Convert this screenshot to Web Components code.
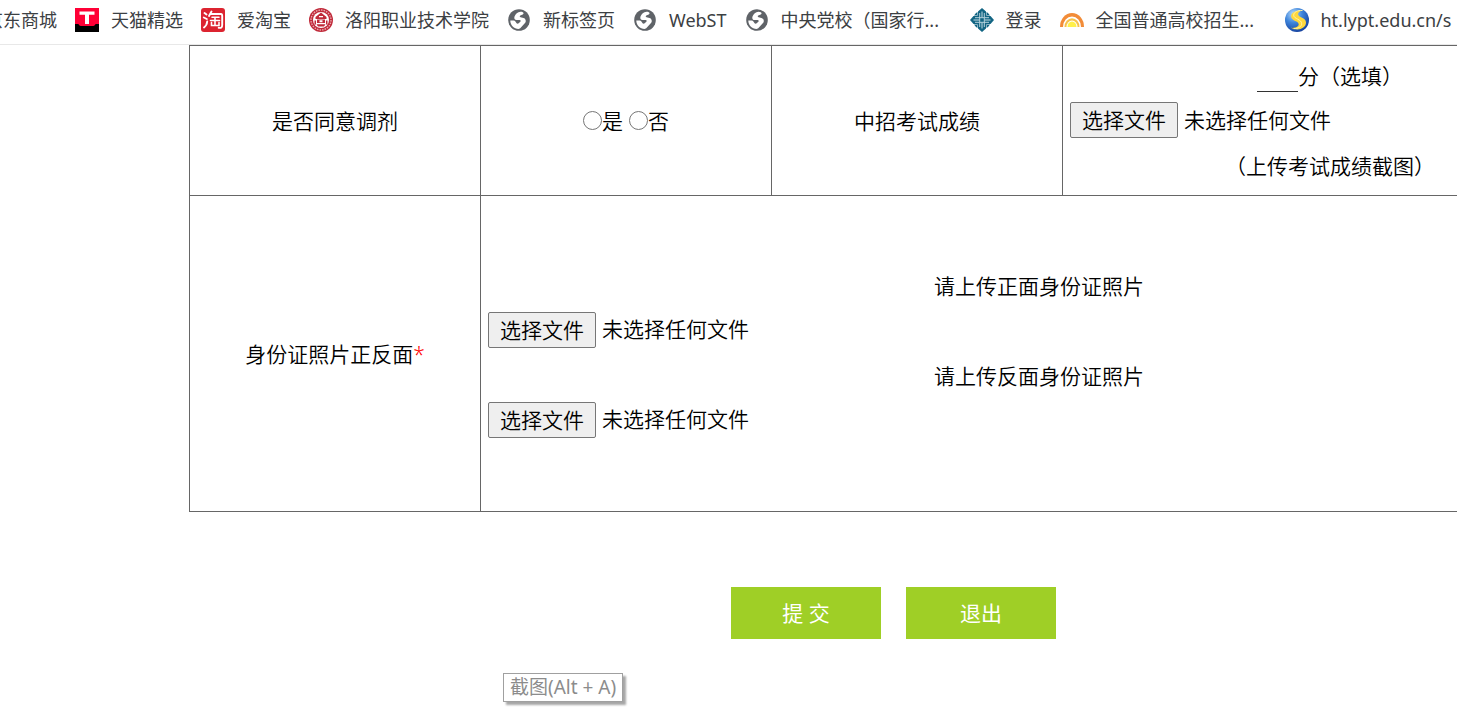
<!DOCTYPE html>
<html lang="zh-CN">
<head>
<meta charset="utf-8">
<meta name="viewport" content="width=device-width, initial-scale=1">
<title>报名表</title>
<style>
  body {
    margin: 0;
    background: #fff;
    color: #000;
    font-family: "Noto Sans", "Noto Sans CJK SC", sans-serif;
    overflow-x: hidden;
  }
</style>
</head>
<body>
<bookmark-bar>
  <bookmark-link>京东商城</bookmark-link>
  <bookmark-link icon="tmall">天猫精选</bookmark-link>
  <bookmark-link icon="taobao">爱淘宝</bookmark-link>
  <bookmark-link icon="college">洛阳职业技术学院</bookmark-link>
  <bookmark-link icon="globe">新标签页</bookmark-link>
  <bookmark-link icon="globe">WebST</bookmark-link>
  <bookmark-link icon="globe" long>中央党校（国家行...</bookmark-link>
  <bookmark-link icon="knot">登录</bookmark-link>
  <bookmark-link icon="sun" long>全国普通高校招生...</bookmark-link>
  <bookmark-link icon="swirl">ht.lypt.edu.cn/s</bookmark-link>
</bookmark-bar>
<enrol-form></enrol-form>
<hover-tip>截图(Alt + A)</hover-tip>

<script>
const ICONS = {
  tmall: `
    <rect width="24" height="24" fill="#ff0036"/>
    <path d="M0 16h3c1 0 1 2 3 2h12c2 0 2-2 3-2h3v8H0z" fill="#000"/>
    <path d="M4.500 3.500h15v3.200h-5.500V16h-4V6.700H4.500z" fill="#fff"/>`,
  taobao: `
    <rect width="24" height="24" rx="3" fill="#dc2430"/>
    <g fill="none" stroke="#fff" stroke-width="1.9" stroke-linecap="round">
      <path d="M3.500 5l2 1.500M2.800 9.500l3 1.500M3 19.500c2-1.500 3-3.500 3.200-6"/>
      <path d="M10.500 3.500L8 8M9.500 6H20c1 0 1.200 1 1.200 2v9c0 2.500-1 3-3.500 2.800"/>
      <path d="M11 9.300h7M9.500 12.500h9M14 9.500v7.500M10.500 14.500v3h7.500v-3" stroke-width="1.600"/>
    </g>`,
  college: `
    <circle cx="12" cy="12" r="12" fill="#c02a3a"/>
    <circle cx="12" cy="12" r="10" fill="none" stroke="#e9a9af" stroke-width="1.300" stroke-dasharray="1.600 1"/>
    <circle cx="12" cy="12" r="8" fill="#fff"/>
    <path d="M12 4.500l5.500 4.500v2h-11V9zM8 11.500h8V15H8zM5.500 12.500h1.500v4H5.500zM17 12.500h1.500v4H17zM7.500 16.200h9l-1.500 2.300H9z" fill="#c02a3a"/>
    <path d="M10 8h4v1.300h-4zM10.500 12.200h3v2h-3z" fill="#fff"/>`,
  globe: `
    <circle cx="12" cy="12" r="10.800" fill="#5f6368"/>
    <path d="M13.500 3.800c-3 .2-5 2.200-6 4.700-.7 2 .3 3.600 2 3.600h3.200c1 0 1.300 1 .6 1.700l-1.600 1.500c-.8.7-1.800.5-2.300-.3l-1-1.500c-.4-.6-1-.9-1.800-.9H3.300c0 4.800 3.700 8.300 8.200 8.300 1 0 1.600-.5 2.200-1.200l4.300-4.600c1.500-1.800.8-4.600-1.500-5.200l-3-.7c-1-.3-1-1.300-.2-1.700l2.400-1c1.600-.8 1-2.700-2.200-2.700z" fill="#fff"/>`,
  knot: `
    <path d="M12 0l4 3.500V7l1 1h3.500L24 12l-3.500 4H17l-1 1v3.500L12 24l-4-3.500V17l-1-1H3.500L0 12l3.500-4H7l1-1V3.500z" fill="#126583"/>
    <path d="M6 5l1.500-1v3.500H4zM18 5l-1.500-1v3.500H20zM6 19l1.500 1v-3.500H4zM18 19l-1.500 1v-3.500H20z" fill="#126583"/>
    <path d="M12 3.500v6M12 14.500v6M3.500 12h6M14.500 12h6" fill="none" stroke="#c5dde4" stroke-width="1"/>
    <path d="M9.700 5v9.300H5M14.300 19V9.700H19M5 9.700h9.300V5M19 14.300H9.700V19" fill="none" stroke="#c5dde4" stroke-width=".9"/>`,
  sun: `
    <path d="M0 19a12 14 0 0 1 24 0z" fill="#f28c38"/>
    <path d="M3 19a9 10.500 0 0 1 18 0z" fill="#fff"/>
    <path d="M4.500 19a7.500 8.700 0 0 1 15 0z" fill="#f7c24a"/>
    <path d="M6.500 19a5.500 6.500 0 0 1 11 0z" fill="#fff"/>
    <path d="M7.500 19a4.500 5.500 0 0 1 9 0z" fill="#fff04a"/>`,
  swirl: `
    <defs>
      <radialGradient id="ball" cx=".35" cy=".25" r=".8">
        <stop offset="0" stop-color="#b9dcfb"/>
        <stop offset=".45" stop-color="#3f86dc"/>
        <stop offset="1" stop-color="#143f9c"/>
      </radialGradient>
    </defs>
    <circle cx="12" cy="12" r="12" fill="url(#ball)"/>
    <path d="M17.500 2.500C10 1.800 5.500 5 6.200 9c.6 4 7.500 4 7.500 7.300 0 2.400-3.200 4-7.700 3.500 6.500 3.500 15 1 15-5.300 0-5.200-7.800-5-8-8.300-.1-1.900 2-3 4.500-3.700z" fill="#ffd83c"/>
    <path d="M17.500 2.500C12.500 2 8.500 4 8.700 7.500c.3 3.500 8 3.800 8 8.200 0 3-3.500 4.800-8 5" fill="none" stroke="#fff3a8" stroke-width="1"/>`
};

class BookmarkBar extends HTMLElement {
  constructor() {
    super();
    this.attachShadow({ mode: 'open' });
    this.shadowRoot.innerHTML = `
      <style>
        :host {
          display: block;
          overflow: hidden;
          border-bottom: 1px solid #e8e8e8;
        }
        /* the strip is scrolled a little to the right */
        nav {
          display: flex;
          gap: 18px;
          margin-left: -15px;
          padding: 8px 0 12px;
        }
      </style>
      <nav aria-label="书签栏"><slot></slot></nav>
    `;
  }
}

class BookmarkLink extends HTMLElement {
  constructor() {
    super();
    this.attachShadow({ mode: 'open' });
  }

  connectedCallback() {
    const icon = ICONS[this.getAttribute('icon')];
    this.shadowRoot.innerHTML = `
      <style>
        :host {
          display: block;
          flex: none;
        }
        a {
          display: flex;
          align-items: center;
          gap: 12px;
          color: #3c4043;
          font-size: 18px;
          line-height: 24px;
          text-decoration: none;
          white-space: nowrap;
        }
        svg {
          display: block;
          flex: none;
          width: 24px;
          height: 24px;
        }
        :host([long]) span {
          width: 171px;
        }
      </style>
      <a href="#">${icon ? `<svg viewBox="0 0 24 24" aria-hidden="true">${icon}</svg>` : ''}<span><slot></slot></span></a>
    `;
  }
}

class FilePicker extends HTMLElement {
  constructor() {
    super();
    this.attachShadow({ mode: 'open' });
  }

  connectedCallback() {
    this.shadowRoot.innerHTML = `
      <style>
        :host {
          display: flex;
          align-items: center;
          gap: 6px;
          box-sizing: border-box;
          height: 45px;
          padding-bottom: 3px;
          text-align: left;
        }
        button {
          height: 36px;
          padding: 0 11px;
          border: 1px solid #767676;
          border-radius: 2px;
          background: #efefef;
          color: #000;
          font: inherit;
          line-height: 34px;
        }
      </style>
      <input id="file" type="file" aria-label="${this.getAttribute('label')}" hidden>
      <button type="button">选择文件</button>
      <output for="file">未选择任何文件</output>
    `;
    const input = this.shadowRoot.querySelector('input');
    this.shadowRoot.querySelector('button').addEventListener('click', () => input.click());
    input.addEventListener('change', () => {
      this.shadowRoot.querySelector('output').textContent =
        input.files.length ? input.files[0].name : '未选择任何文件';
    });
  }
}

class ActionButton extends HTMLElement {
  constructor() {
    super();
    this.attachShadow({ mode: 'open' });
    this.shadowRoot.innerHTML = `
      <style>
        :host {
          display: block;
        }
        button {
          min-width: 150px;
          height: 52px;
          padding: 0 24px;
          border: 0;
          background: #9fcf26;
          color: #fff;
          font: inherit;
          font-weight: 400;
          cursor: pointer;
        }
      </style>
      <button type="button"><slot></slot></button>
    `;
  }
}

class EnrolForm extends HTMLElement {
  constructor() {
    super();
    this.attachShadow({ mode: 'open' });
    this.shadowRoot.innerHTML = `
      <style>
        :host {
          display: block;
          overflow-x: auto;
          scrollbar-width: none;
          font-size: 21px;
          font-weight: 350;
          line-height: 45px;
        }
        form {
          width: max-content;
          margin-left: 189px;
        }
        table {
          width: 1409px;
          border-collapse: collapse;
          table-layout: fixed;
        }
        col.cell {
          width: 291px;
        }
        th,
        td {
          padding: 8px 7px 6px;
          border: 1px solid #666;
          font-weight: inherit;
          text-align: center;
        }
        .photos td,
        .photos th {
          height: 301px;
        }
        .photos td {
          padding: 7px;
        }
        p {
          margin: 0;
        }
        .star {
          color: #f00;
        }
        input[type=radio] {
          appearance: none;
          box-sizing: border-box;
          width: 19px;
          height: 19px;
          margin: 0;
          border: 1px solid #767676;
          border-radius: 50%;
          vertical-align: -1px;
        }
        input[type=radio]:checked {
          background: radial-gradient(#0075ff 50%, #fff 55%);
        }
        .choices,
        .score {
          display: flex;
          justify-content: center;
          align-items: center;
        }
        .choices {
          gap: 6px;
        }
        .score input {
          box-sizing: border-box;
          width: 41px;
          height: 30px;
          padding: 0;
          border: 0;
          border-bottom: 1px solid #333;
          font: inherit;
          text-align: center;
        }
        .actions {
          display: flex;
          justify-content: center;
          gap: 25px;
          margin-top: 75px;
        }
      </style>
      <form>
        <table>
          <colgroup><col class="cell"><col class="cell"><col class="cell"><col></colgroup>
          <tr>
            <th scope="row">是否同意调剂</th>
            <td>
              <div class="choices">
                <label><input type="radio" name="adjust" value="1">是</label>
                <label><input type="radio" name="adjust" value="0">否</label>
              </div>
            </td>
            <th scope="row">中招考试成绩</th>
            <td>
              <label class="score"><input type="text" name="score">分（选填）</label>
              <file-picker label="考试成绩截图"></file-picker>
              <p>（上传考试成绩截图）</p>
            </td>
          </tr>
          <tr class="photos">
            <th scope="row">身份证照片正反面<span class="star">*</span></th>
            <td colspan="3">
              <p>请上传正面身份证照片</p>
              <file-picker label="正面身份证照片"></file-picker>
              <p>请上传反面身份证照片</p>
              <file-picker label="反面身份证照片"></file-picker>
            </td>
          </tr>
        </table>
        <div class="actions">
          <action-button>提 交</action-button>
          <action-button>退出</action-button>
        </div>
      </form>
    `;
  }
}

class HoverTip extends HTMLElement {
  constructor() {
    super();
    this.attachShadow({ mode: 'open' });
    this.shadowRoot.innerHTML = `
      <style>
        :host {
          position: absolute;
          top: 673px;
          left: 503px;
          padding: 0 6px;
          border: 1px solid #a0a0a0;
          background: #fff;
          box-shadow: 3px 3px 2px rgba(0, 0, 0, .35);
          color: #8c8c8c;
          font-size: 19px;
          line-height: 27px;
          white-space: nowrap;
        }
      </style>
      <span role="tooltip"><slot></slot></span>
    `;
  }
}

customElements.define('bookmark-bar', BookmarkBar);
customElements.define('bookmark-link', BookmarkLink);
customElements.define('file-picker', FilePicker);
customElements.define('action-button', ActionButton);
customElements.define('enrol-form', EnrolForm);
customElements.define('hover-tip', HoverTip);
</script>
</body>
</html>
